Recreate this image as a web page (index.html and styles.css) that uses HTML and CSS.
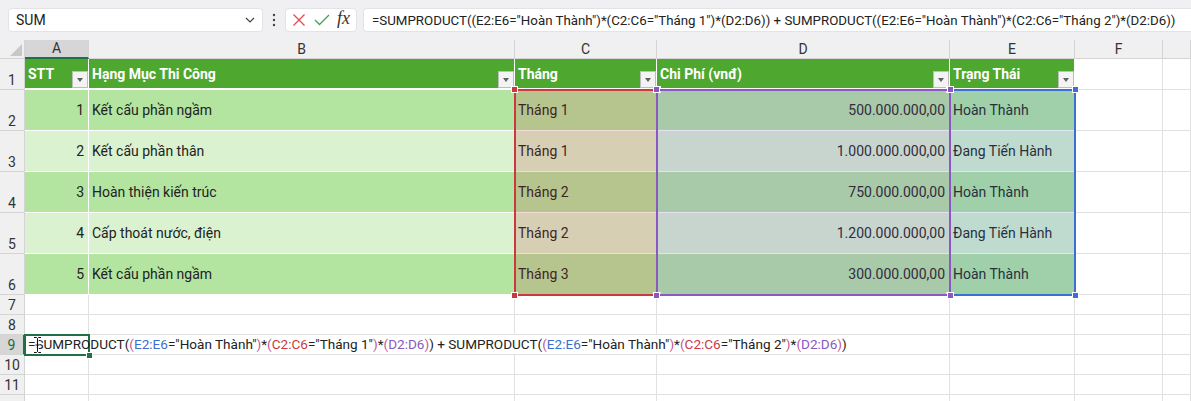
FILE: index.html
```html
<!DOCTYPE html>
<html lang="vi">
<head>
    <meta charset="UTF-8">
    <meta name="viewport" content="width=device-width, initial-scale=1.0">
    <title>Bảng chi phí thi công</title>
    <link rel="stylesheet" href="styles.css">
</head>
<body>

    <div class="toolbar">
        <div class="namebox">
            <span>SUM</span>
            <svg width="10" height="6" viewBox="0 0 10 6"><path d="M1 1L5 5L9 1" fill="none" stroke="#444" stroke-width="1.2"/></svg>
        </div>
        <div class="dots">
            <svg width="4" height="14" viewBox="0 0 4 14"><circle cx="2" cy="2" r="1.2" fill="#444"/><circle cx="2" cy="7" r="1.2" fill="#444"/><circle cx="2" cy="12" r="1.2" fill="#444"/></svg>
        </div>
        <div class="fxbox">
            <svg width="14" height="14" viewBox="0 0 14 14"><path d="M1.5 1.5L12.5 12.5M12.5 1.5L1.5 12.5" stroke="#e5484d" stroke-width="1.3"/></svg>
            <svg width="16" height="12" viewBox="0 0 16 12"><path d="M1 6L5.5 10.5L15 1" fill="none" stroke="#3aa657" stroke-width="1.3"/></svg>
            <span class="fx">fx</span>
        </div>
        <div class="formula">=SUMPRODUCT((E2:E6="Hoàn Thành")*(C2:C6="Tháng 1")*(D2:D6)) + SUMPRODUCT((E2:E6="Hoàn Thành")*(C2:C6="Tháng 2")*(D2:D6))</div>
    </div>

    <div class="sheet-wrap">
        <div class="sheet">
            <!-- tiêu đề cột -->
            <div class="corner"><svg width="25" height="19" viewBox="0 0 25 19"><path d="M22 4V16H10Z" fill="#c8c8c8"/></svg></div>
            <div class="ch active">A</div>
            <div class="ch">B</div>
            <div class="ch">C</div>
            <div class="ch">D</div>
            <div class="ch">E</div>
            <div class="ch">F</div>
            <div class="ch"></div>

            <!-- hàng 1 -->
            <div class="rh">1</div>
            <div class="th"><span>STT</span><i class="filter"></i></div>
            <div class="th"><span>Hạng Mục Thi Công</span><i class="filter"></i></div>
            <div class="th"><span>Tháng</span><i class="filter"></i></div>
            <div class="th"><span>Chi Phí (vnđ)</span><i class="filter"></i></div>
            <div class="th"><span>Trạng Thái</span><i class="filter"></i></div>
            <div class="c"></div>
            <div class="c"></div>

            <!-- hàng 2 -->
            <div class="rh">2</div>
            <div class="td band num">1</div>
            <div class="td band">Kết cấu phần ngầm</div>
            <div class="td band">Tháng 1</div>
            <div class="td band num">500.000.000,00</div>
            <div class="td band">Hoàn Thành</div>
            <div class="c"></div>
            <div class="c"></div>

            <!-- hàng 3 -->
            <div class="rh">3</div>
            <div class="td num">2</div>
            <div class="td">Kết cấu phần thân</div>
            <div class="td">Tháng 1</div>
            <div class="td num">1.000.000.000,00</div>
            <div class="td">Đang Tiến Hành</div>
            <div class="c"></div>
            <div class="c"></div>

            <!-- hàng 4 -->
            <div class="rh">4</div>
            <div class="td band num">3</div>
            <div class="td band">Hoàn thiện kiến trúc</div>
            <div class="td band">Tháng 2</div>
            <div class="td band num">750.000.000,00</div>
            <div class="td band">Hoàn Thành</div>
            <div class="c"></div>
            <div class="c"></div>

            <!-- hàng 5 -->
            <div class="rh">5</div>
            <div class="td num">4</div>
            <div class="td">Cấp thoát nước, điện</div>
            <div class="td">Tháng 2</div>
            <div class="td num">1.200.000.000,00</div>
            <div class="td">Đang Tiến Hành</div>
            <div class="c"></div>
            <div class="c"></div>

            <!-- hàng 6 -->
            <div class="rh">6</div>
            <div class="td band num">5</div>
            <div class="td band">Kết cấu phần ngầm</div>
            <div class="td band">Tháng 3</div>
            <div class="td band num">300.000.000,00</div>
            <div class="td band">Hoàn Thành</div>
            <div class="c"></div>
            <div class="c"></div>

            <!-- hàng 7, 8 -->
            <div class="rh">7</div>
            <div class="c"></div><div class="c"></div><div class="c"></div><div class="c"></div><div class="c"></div><div class="c"></div><div class="c"></div>
            <div class="rh">8</div>
            <div class="c"></div><div class="c"></div><div class="c"></div><div class="c"></div><div class="c"></div><div class="c"></div><div class="c"></div>

            <!-- hàng 9: công thức đang nhập, tràn sang các ô bên phải -->
            <div class="rh active">9</div>
            <div class="c spill"><span class="edit">=SUMPRODUCT(<b class="p">(</b><b class="rb">E2:E6</b>="Hoàn Thành"<b class="p">)</b>*<b class="p">(</b><b class="rr">C2:C6</b>="Tháng 1"<b class="p">)</b>*<b class="p">(</b><b class="rp">D2:D6</b><b class="p">)</b>) + SUMPRODUCT(<b class="p">(</b><b class="rb">E2:E6</b>="Hoàn Thành"<b class="p">)</b>*<b class="p">(</b><b class="rr">C2:C6</b>="Tháng 2"<b class="p">)</b>*<b class="p">(</b><b class="rp">D2:D6</b><b class="p">)</b>)</span></div>
            <div class="c"></div><div class="c"></div><div class="c"></div>

            <!-- hàng 10 - 12 -->
            <div class="rh">10</div>
            <div class="c"></div><div class="c"></div><div class="c"></div><div class="c"></div><div class="c"></div><div class="c"></div><div class="c"></div>
            <div class="rh">11</div>
            <div class="c"></div><div class="c"></div><div class="c"></div><div class="c"></div><div class="c"></div><div class="c"></div><div class="c"></div>
            <div class="rh"></div>
            <div class="c"></div><div class="c"></div><div class="c"></div><div class="c"></div><div class="c"></div><div class="c"></div><div class="c"></div>
        </div>

        <!-- lớp trên: vùng tham chiếu và ô đang chọn -->
        <div class="layer">
            <div class="range range-c"><i class="h tl"></i><i class="h tr"></i><i class="h bl"></i><i class="h br"></i></div>
            <div class="range range-e"><i class="h tl"></i><i class="h tr"></i><i class="h bl"></i><i class="h br"></i></div>
            <div class="range range-d"><i class="h tl"></i><i class="h tr"></i><i class="h bl"></i><i class="h br"></i></div>
            <div class="selection">
                <i class="grip"></i>
            </div>
            <svg class="ibeam" width="9" height="18" viewBox="0 0 9 18"><path d="M1 1.5H3.5L4.5 2.5L5.5 1.5H8M4.5 2.5V15.5M1 16.5H3.5L4.5 15.5L5.5 16.5H8M2.5 9H6.5" fill="none" stroke="#fff" stroke-width="2.4"/><path d="M1 1.5H3.5L4.5 2.5L5.5 1.5H8M4.5 2.5V15.5M1 16.5H3.5L4.5 15.5L5.5 16.5H8M2.5 9H6.5" fill="none" stroke="#111" stroke-width="1"/></svg>
        </div>
    </div>

</body>
</html>
```

FILE: styles.css
```css
body {
    margin: 0;
    font-family: Roboto, "Liberation Sans", sans-serif;
    font-size: 14px;
    color: #222;
    background: #fff;
    overflow: hidden;
}

/* thanh công thức */
.toolbar {
    display: flex;
    align-items: center;
    height: 40px;
    padding-left: 8px;
    background: #f0f0f2;
    box-sizing: border-box;
}
.namebox,
.fxbox,
.formula {
    height: 24px;
    background: #fff;
    border: 1px solid #e3e3e6;
    border-radius: 4px;
    box-sizing: border-box;
    display: flex;
    align-items: center;
}
.namebox {
    width: 255px;
    padding: 0 7px 0 7px;
    justify-content: space-between;
}
.dots {
    width: 22px;
    display: flex;
    justify-content: center;
}
.fxbox {
    width: 72px;
    padding: 0 6px 0 6px;
    justify-content: space-between;
}
.fx {
    font-family: "Liberation Serif", serif;
    font-style: italic;
    font-size: 18px;
    color: #333;
    margin-top: -3px;
}
.formula {
    flex: 1;
    margin-left: 6px;
    padding-left: 8px;
    font-size: 13.3px;
    white-space: nowrap;
    overflow: hidden;
    border-right: none;
    border-radius: 4px 0 0 4px;
}

/* lưới bảng tính */
.sheet-wrap {
    display: grid;
}
.sheet,
.layer {
    grid-area: 1 / 1;
    display: grid;
    grid-template-columns: 25px 64px 426px 142px 293px 125px 88px 1fr;
    grid-template-rows: 19px 31px repeat(5, 41px) repeat(6, 20px);
}
.layer {
    pointer-events: none;
}
.sheet > div {
    box-sizing: border-box;
    min-width: 0;
}
.c {
    border-right: 1px solid #e1e1e1;
    border-bottom: 1px solid #e1e1e1;
}
.corner {
    background: #f0f0f0;
    border-right: 1px solid #d4d4d4;
    border-bottom: 1px solid #d4d4d4;
}
.corner svg {
    display: block;
}
.ch {
    background: #f0f0f0;
    border-right: 1px solid #d4d4d4;
    border-bottom: 1px solid #d4d4d4;
    text-align: center;
    line-height: 18px;
    color: #333;
}
.ch.active {
    background: #d6d6d6;
    border-bottom: 2px solid #1e7145;
    line-height: 17px;
}
.rh {
    background: #f0f0f0;
    border-right: 1px solid #d4d4d4;
    border-bottom: 1px solid #d4d4d4;
    display: flex;
    align-items: flex-end;
    justify-content: center;
    line-height: 16px;
    color: #333;
    padding-bottom: 1px;
}
.rh.active {
    background: #d6d6d6;
    border-right: 2px solid #1e7145;
    color: #1e6b41;
}

/* bảng dữ liệu */
.th {
    background: #4ea72e;
    color: #fff;
    font-weight: bold;
    border-right: 1px solid #fff;
    border-bottom: 2px solid #fff;
    display: flex;
    justify-content: space-between;
    align-items: center;
    padding-left: 3px;
    padding-top: 1px;
}
.filter {
    align-self: flex-end;
    width: 16px;
    height: 17px;
    box-sizing: border-box;
    background: #f3f3f3;
    border: 1px solid #bdbdbd;
    position: relative;
}
.filter::after {
    content: "";
    position: absolute;
    left: 4px;
    top: 6px;
    border-left: 3.5px solid transparent;
    border-right: 3.5px solid transparent;
    border-top: 4px solid #606060;
}
.td {
    background: #daf2d0;
    border-right: 1px solid #fff;
    border-bottom: 1px solid #fff;
    display: flex;
    align-items: center;
    padding: 0 4px 0 3px;
    white-space: nowrap;
}
.td.band {
    background: #b3e5a1;
}
.td.num {
    justify-content: flex-end;
}
.spill {
    grid-column: span 4;
    white-space: nowrap;
    line-height: 19px;
    padding-left: 3px;
    font-size: 13.55px;
}
.edit {
    position: relative;
    z-index: 1;
}
.spill b {
    font-weight: normal;
}
.spill .p { color: #c2559a; }
.spill .rb { color: #3c6fd0; }
.spill .rr { color: #cc3a42; }
.spill .rp { color: #8a58c0; }

/* vùng tham chiếu công thức */
.range {
    position: relative;
    grid-row: 3 / 8;
    margin: -1px;
    border: 2px solid;
}
.range-c {
    grid-column: 4;
    border-color: #c9393e;
    background: rgba(197, 48, 48, 0.18);
}
.range-d {
    grid-column: 5;
    border-color: #8a58c0;
    background: rgba(123, 84, 200, 0.18);
}
.range-e {
    grid-column: 6;
    border-color: #3c6fd0;
    background: rgba(73, 118, 205, 0.18);
}
.h {
    position: absolute;
    width: 7px;
    height: 7px;
    box-sizing: border-box;
    border: 1px solid #fff;
}
.range-c .h { background: #c9393e; }
.range-d .h { background: #8a58c0; }
.range-e .h { background: #3c6fd0; }
.tl { left: -5px; top: -5px; }
.tr { right: -5px; top: -5px; }
.bl { left: -5px; bottom: -5px; }
.br { right: -5px; bottom: -5px; }

.selection {
    position: relative;
    grid-column: 2;
    grid-row: 10;
    margin: -1px;
    border: 2px solid #1e7145;
}
.grip {
    position: absolute;
    right: -5px;
    bottom: -5px;
    width: 7px;
    height: 7px;
    box-sizing: border-box;
    background: #1e7145;
    border: 1px solid #fff;
}
.ibeam {
    grid-column: 2;
    grid-row: 10;
    position: relative;
    z-index: 2;
    margin: 1px 0 0 8px;
}
```
